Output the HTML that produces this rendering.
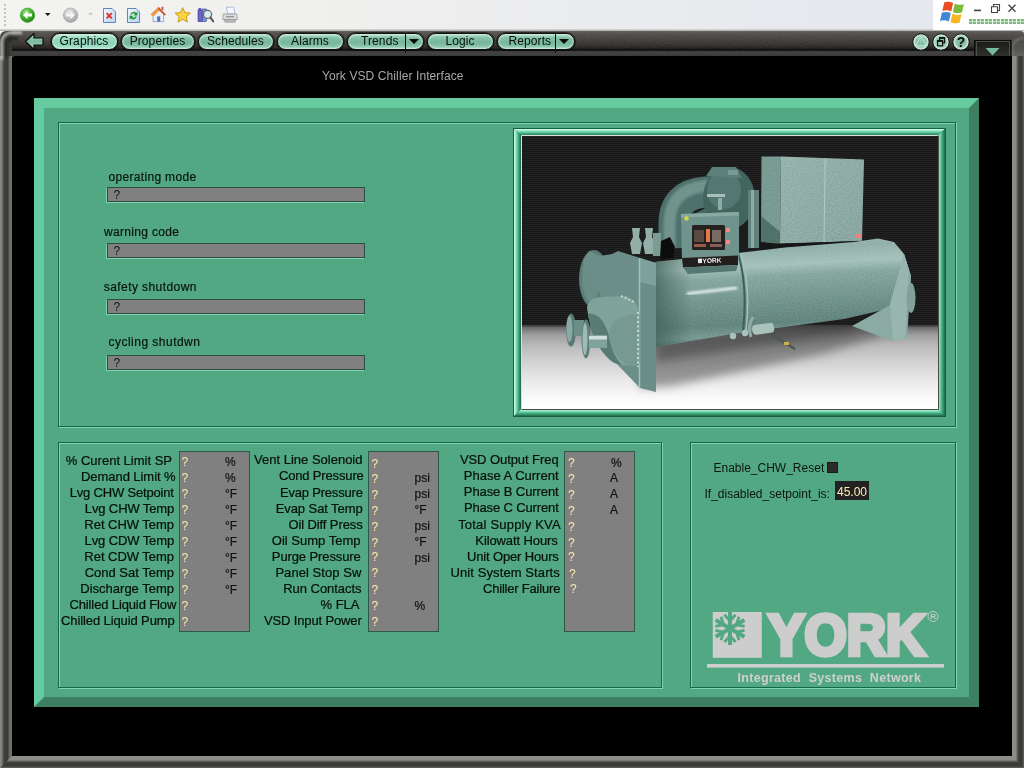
<!DOCTYPE html>
<html><head><meta charset="utf-8"><title>York VSD Chiller Interface</title>
<style>
html,body{margin:0;padding:0;background:#000;}
body{width:1024px;height:768px;position:relative;overflow:hidden;font-family:"Liberation Sans",sans-serif;font-size:12px;color:#111;}
.a{position:absolute;}
.t{position:absolute;white-space:nowrap;line-height:1;}
.lab{-webkit-text-stroke:0.22px #06110c;position:absolute;white-space:nowrap;font-size:13px;line-height:15px;height:15px;text-align:right;color:#06110c;}
.q{position:absolute;white-space:nowrap;font-size:12px;line-height:14px;color:#ffe9a8;}
.u{-webkit-text-stroke:0.2px #111;position:absolute;white-space:nowrap;font-size:12px;line-height:14px;color:#111;}
.gbox{position:absolute;background:#808080;border:1px solid #2c5a48;box-sizing:border-box;}
.fld{position:absolute;background:#808080;border:1px solid #2b4f40;box-sizing:border-box;box-shadow:-1px 1px 0 #7fd0ac;}
.groove{position:absolute;box-sizing:border-box;border:1px solid #0f6a46;box-shadow:inset 1px 1px 0 #80d4ae, 1px 1px 0 #80d4ae;}
.btn{position:absolute;top:32.5px;height:17.5px;box-sizing:border-box;border-radius:8.75px;font-size:12px;line-height:15px;letter-spacing:0.1px;margin-left:-0.5px;padding-right:0;color:#0a0f0c;text-align:center;
 background:linear-gradient(#bfe3d4 0%,#86c3aa 24%,#76b69c 55%,#84c1a8 80%,#b0d9c9 100%);border:1px solid #10100f;box-shadow:0 0 0 1px rgba(0,0,0,.5), inset 0 0 2px 1px rgba(214,238,228,.75);}
</style></head><body>
<div id="root" style="position:absolute;left:0;top:0;width:1024px;height:768px;will-change:transform;">
<!-- browser chrome -->
<div class="a" style="left:0;top:0;width:1024px;height:31px;background:linear-gradient(90deg,#f3f3f1 0%,#efefee 35%,#e8eaee 70%,#e3e6ee 100%);"></div>
<div class="a" style="left:0;top:29px;width:1024px;height:2px;background:linear-gradient(#dcdcda,#a9a9a6);"></div>
<div class="a" style="left:933px;top:0;width:91px;height:30px;background:#fefefe;"></div>
<svg class="a" style="left:0;top:0" width="1024" height="31" viewBox="0 0 1024 31">
 <defs>
  <radialGradient id="gBack" cx="0.4" cy="0.3" r="0.75"><stop offset="0" stop-color="#9be37c"/><stop offset="0.55" stop-color="#3fae2c"/><stop offset="1" stop-color="#1f7d18"/></radialGradient>
  <radialGradient id="gFwd" cx="0.4" cy="0.3" r="0.75"><stop offset="0" stop-color="#e6e6e6"/><stop offset="0.6" stop-color="#bdbdbd"/><stop offset="1" stop-color="#9c9c9c"/></radialGradient>
  <linearGradient id="gPage" x1="0" y1="0" x2="1" y2="1"><stop offset="0" stop-color="#f4f8ff"/><stop offset="1" stop-color="#b9d2f2"/></linearGradient>
 </defs>
 <!-- grip -->
 <g fill="#c2c2bf"><rect x="4" y="4" width="2" height="2"/><rect x="4" y="8" width="2" height="2"/><rect x="4" y="12" width="2" height="2"/><rect x="4" y="16" width="2" height="2"/><rect x="4" y="20" width="2" height="2"/><rect x="4" y="24" width="2" height="2"/></g>
 <!-- back -->
 <circle cx="27.5" cy="15.2" r="7.2" fill="url(#gBack)" stroke="#3c9a2c" stroke-width="0.6"/>
 <path d="M23 15 L27.5 10.8 L27.5 13.4 L32 13.4 L32 16.6 L27.5 16.6 L27.5 19.2 Z" fill="#fff"/>
 <path d="M45 13 L50.5 13 L47.75 16 Z" fill="#111"/>
 <!-- forward -->
 <circle cx="70.6" cy="15.2" r="7.2" fill="url(#gFwd)" stroke="#a6a6a6" stroke-width="0.7"/>
 <path d="M75 15 L70.5 10.8 L70.5 13.4 L66 13.4 L66 16.6 L70.5 16.6 L70.5 19.2 Z" fill="#f4f4f4"/>
 <path d="M88 13 L93 13 L90.5 15.6 Z" fill="#c4c4c4"/>
 <!-- stop -->
 <path d="M103.5 8.5 L112 8.5 L115.5 12 L115.5 22.5 L103.5 22.5 Z" fill="url(#gPage)" stroke="#5f86c4" stroke-width="1"/>
 <path d="M106.6 13.2 L111.8 18.4 M111.8 13.2 L106.6 18.4" stroke="#e0322b" stroke-width="1.9"/>
 <!-- refresh -->
 <path d="M127.5 8.5 L136 8.5 L139.5 12 L139.5 22.5 L127.5 22.5 Z" fill="url(#gPage)" stroke="#5f86c4" stroke-width="1"/>
 <path d="M130.2 14.6 A3.6 3.6 0 0 1 136.2 12.8 L137.4 11.6 L137.4 15.4 L133.6 15.4 L134.9 14.1 A2 2 0 0 0 131.8 14.6 Z" fill="#1f9a35"/>
 <path d="M136.8 16.6 A3.6 3.6 0 0 1 130.8 18.4 L129.6 19.6 L129.6 15.8 L133.4 15.8 L132.1 17.1 A2 2 0 0 0 135.2 16.6 Z" fill="#1f9a35"/>
 <!-- home -->
 <path d="M151 14.5 L158.5 7.2 L165.5 14.5 L163.6 14.5 L163.6 21.6 L153 21.6 L153 14.5 Z" fill="#e9eef8" stroke="#8a9cc0" stroke-width="0.8"/>
 <path d="M150.6 14.8 L158.5 7 L160.6 9.2 L153.4 16.6 Z" fill="#f39a3a"/>
 <path d="M158.5 7 L166 14.8 L164.4 15.6 L158.3 9.4 Z" fill="#c9552a"/>
 <rect x="157.2" y="16.4" width="3" height="5.2" fill="#4f6fb8"/>
 <rect x="161.6" y="6.8" width="1.8" height="3.4" fill="#b9553a"/>
 <!-- star -->
 <path d="M182.7 7.6 L184.9 12.6 L190.4 13.1 L186.2 16.8 L187.5 22.2 L182.7 19.3 L177.9 22.2 L179.2 16.8 L175 13.1 L180.5 12.6 Z" fill="#fbd43a" stroke="#c8951a" stroke-width="0.9" stroke-linejoin="round"/>
 <!-- search -->
 <rect x="198" y="10" width="4.2" height="11.6" fill="#6a63c8" stroke="#3e3a8c" stroke-width="0.6"/>
 <rect x="202.4" y="9" width="4" height="12.6" fill="#7d8fd8" stroke="#3e4a8c" stroke-width="0.6"/>
 <rect x="198.6" y="8" width="2.6" height="2" fill="#5a54a8"/>
 <circle cx="207.6" cy="14.4" r="4" fill="#d9ecf6" stroke="#6a6a6a" stroke-width="1.2"/>
 <path d="M210.4 17.4 L213.2 21.4" stroke="#54585e" stroke-width="2" stroke-linecap="round"/>
 <!-- print -->
 <path d="M226.5 7.2 L233.6 7.2 L235 13.8 L227.6 13.8 Z" fill="#f4f8ff" stroke="#9ab0d6" stroke-width="0.8"/>
 <path d="M223.2 14 L236.8 14 L237.4 19.6 L222.8 19.6 Z" fill="#dcdcdc" stroke="#9a9a9a" stroke-width="0.8"/>
 <path d="M224.2 19.6 L236 19.6 L235 22.2 L225.2 22.2 Z" fill="#bcbcbc" stroke="#8c8c8c" stroke-width="0.6"/>
 <rect x="226" y="16.2" width="8" height="1.2" fill="#8e8e8e"/>
 <!-- windows flag -->
 <g transform="translate(940 1.6) scale(1.17) translate(-939.8 -2.6)">
 <path d="M943.5 3.2 Q947 1.8 951 3.8 L949.4 11 Q945.6 9.2 941.8 10.6 Z" fill="#ea4d24"/>
 <path d="M952.4 4.4 Q956.4 6.2 960.2 4.6 L958.6 11.8 Q954.8 13.4 950.8 11.6 Z" fill="#7bbd38"/>
 <path d="M941.4 12 Q945.2 10.6 949 12.4 L947.4 19.6 Q943.6 17.8 939.8 19.2 Z" fill="#3f86d6"/>
 <path d="M950.4 13 Q954.4 14.8 958.2 13.2 L956.6 20.4 Q952.8 22 948.8 20.2 Z" fill="#f9b522"/>
 </g>
 <!-- window controls -->
 <rect x="974" y="9.6" width="7" height="1.6" fill="#444"/>
 <path d="M993.5 6.5 L993.5 4.5 L999.5 4.5 L999.5 10.5 L997.5 10.5 M991.5 6.8 L997.5 6.8 L997.5 12.5 L991.5 12.5 Z" fill="none" stroke="#444" stroke-width="1.1"/>
 <path d="M1008.5 4.8 L1015.5 11.8 M1015.5 4.8 L1008.5 11.8" stroke="#444" stroke-width="1.3"/>
 <!-- progress segments -->
 <g fill="#7db87d"><rect x="969" y="19" width="7" height="5"/><rect x="977" y="19" width="7" height="5"/><rect x="985" y="19" width="7" height="5"/><rect x="993" y="19" width="7" height="5"/><rect x="1001" y="19" width="7" height="5"/><rect x="1009" y="19" width="7" height="5"/><rect x="1017" y="19" width="7" height="5"/></g>
 <g stroke="#fdfdfd" stroke-width="0.8" opacity="0.75"><path d="M969 21.5 H1024"/><path d="M972.5 19 V24 M980.5 19 V24 M988.5 19 V24 M996.5 19 V24 M1004.5 19 V24 M1012.5 19 V24 M1020.5 19 V24"/></g>
</svg>
<!-- frame -->
<div class="a" style="left:0;top:31px;width:1024px;height:737px;background:#000;"></div>
<!-- toolbar band -->
<div class="a" style="left:0;top:31px;width:1024px;height:25px;background:linear-gradient(#676563 0px,#595654 1px,#4e4a48 4px,#423e3c 9px,#332f2e 14px,#211f1f 17px,#0c0c0c 18.5px,#111 19.5px,#3e3e3e 20.5px,#424242 23px,#383838 25px);"></div>
<!-- bottom border -->
<div class="a" style="left:0px;top:756px;width:1024px;height:12px;background:linear-gradient(#8e8e8a 0px,#8a8a86 4px,#565653 5.5px,#3a3b37 7px,#3a3b37 10px,#5a5a57 11.5px,#6a6a67 12px);"></div>
<svg class="a" style="left:0;top:31px" width="1024" height="20"><filter id="tbnoise" x="0" y="0" width="100%" height="100%"><feTurbulence type="fractalNoise" baseFrequency="0.7 0.9" numOctaves="2" seed="7"/><feColorMatrix type="matrix" values="0 0 0 0 0.5  0 0 0 0 0.45  0 0 0 0 0.45  0.6 0 0 0 -0.18"/></filter><rect width="1024" height="20" filter="url(#tbnoise)" opacity="0.35"/></svg>
<!-- left border -->
<div class="a" style="left:0;top:31px;width:12px;height:737px;clip-path:polygon(0 0,12px 0,12px 725px,0 737px);background:linear-gradient(90deg,#8a8a87 0px,#7a7a77 2px,#4a4a48 3.5px,#383836 6px,#3e3e3c 8px,#6c6c69 9.5px,#70706d 12px);"></div>
<!-- right border -->
<div class="a" style="left:1012px;top:56px;width:12px;height:712px;clip-path:polygon(0 0,12px 0,12px 712px,0 700px);background:linear-gradient(90deg,#8e8e8a 0px,#8a8a86 4px,#565653 5.5px,#3a3b37 7px,#3a3b37 10px,#5a5a57 11.5px,#6a6a67 12px);"></div>
<svg class="a" style="left:0;top:31px" width="1024" height="737" viewBox="0 31 1024 737">
 <defs>
  <radialGradient id="cTL" cx="14" cy="58" r="27" gradientUnits="userSpaceOnUse">
   <stop offset="0" stop-color="#000"/><stop offset="0.08" stop-color="#000"/><stop offset="0.1" stop-color="#4a4a48"/><stop offset="0.2" stop-color="#3a3a38"/><stop offset="0.45" stop-color="#2c2c2a"/><stop offset="0.7" stop-color="#454543"/><stop offset="0.86" stop-color="#c8c8c4"/><stop offset="0.95" stop-color="#9a9a97"/><stop offset="1" stop-color="#777"/></radialGradient>
  <radialGradient id="cTR" cx="1010" cy="58" r="27" gradientUnits="userSpaceOnUse">
   <stop offset="0" stop-color="#000"/><stop offset="0.08" stop-color="#000"/><stop offset="0.1" stop-color="#8a8a86"/><stop offset="0.25" stop-color="#7a7a77"/><stop offset="0.45" stop-color="#3a3b37"/><stop offset="0.8" stop-color="#3a3b37"/><stop offset="0.95" stop-color="#5a5a57"/><stop offset="1" stop-color="#666"/></radialGradient>
  <linearGradient id="gDD" x1="0" y1="0" x2="0" y2="1"><stop offset="0" stop-color="#1a1a19"/><stop offset="1" stop-color="#30302e"/></linearGradient>
  <linearGradient id="gArrow" x1="0" y1="0" x2="0" y2="1"><stop offset="0" stop-color="#a8d8c4"/><stop offset="0.5" stop-color="#7cb8a0"/><stop offset="1" stop-color="#b4dccc"/></linearGradient>
  <radialGradient id="gRound" cx="0.5" cy="0.5" r="0.5"><stop offset="0" stop-color="#7ab69c"/><stop offset="0.55" stop-color="#8ac2aa"/><stop offset="0.82" stop-color="#c4e2d6"/><stop offset="0.93" stop-color="#d6ece4"/><stop offset="1" stop-color="#8fbfac"/></radialGradient>
 </defs>
 <!-- top-left rounded corner -->
 <filter id="bl" x="-50%" y="-50%" width="200%" height="200%"><feGaussianBlur stdDeviation="0.9"/></filter>
 <path d="M0 31 H12 V56 H0 Z" fill="#3a3a38"/>
 <path d="M0 31 H6 A6 6 0 0 0 0 37 Z" fill="#f0f0ee"/>
 <g filter="url(#bl)">
 <path d="M1.6 60 V42 A9.5 9.5 0 0 1 11 32.8 H22" fill="none" stroke="#d2d2ce" stroke-width="2.4" opacity="0.95"/>
 <path d="M6 58 V45 A6.5 6.5 0 0 1 12.5 38.5 H18" fill="none" stroke="#262624" stroke-width="4" opacity="0.85"/>
 </g>
 <path d="M12 56 H15 A3 3 0 0 0 12 59 Z" fill="#4a4a48"/>
 <!-- top-right corner -->
 <linearGradient id="trc" x1="0" y1="0" x2="0" y2="1"><stop offset="0" stop-color="#4c4c4a" stop-opacity="0"/><stop offset="0.5" stop-color="#555553" stop-opacity="0.8"/><stop offset="1" stop-color="#62625f"/></linearGradient>
 <path d="M1012 31 H1024 V56 H1012 Z" fill="url(#trc)"/>
 <path d="M1012.5 56 V47 Q1013 41 1019 39 L1024 38" fill="none" stroke="#7a7a77" stroke-width="1.6" filter="url(#bl)"/>
 <path d="M1024 31 V34 A3 3 0 0 0 1021 31 Z" fill="#fefefe"/>
 <!-- back arrow -->
 <path d="M25.5 41.5 L34 33.5 L34 38 L43 38 L43 45 L34 45 L34 49.5 Z" fill="url(#gArrow)" stroke="#0c0c0c" stroke-width="1.2" stroke-linejoin="round"/>
 <!-- round buttons -->
 <g stroke="#141414" stroke-width="1">
  <circle cx="921" cy="42" r="8.2" fill="url(#gRound)"/>
  <circle cx="941" cy="42" r="8.2" fill="url(#gRound)"/>
  <circle cx="961" cy="42" r="8.2" fill="url(#gRound)"/>
 </g>
 <path d="M921 36.4 L926.2 45.6 L915.8 45.6 Z" fill="none" stroke="#b4dccb" stroke-width="1.3" stroke-linejoin="round"/>
 <path d="M921 39.6 V43 M921 43.8 V44.8" stroke="#a9d4c2" stroke-width="1.1"/>
 <rect x="939.6" y="37.8" width="5" height="5" fill="none" stroke="#0a0a0a" stroke-width="1.1"/>
 <rect x="939.1" y="37.2" width="6" height="1.6" fill="#0a0a0a"/>
 <rect x="937.6" y="40.8" width="5" height="5" fill="#9ccdb9" stroke="#0a0a0a" stroke-width="1.1"/>
 <rect x="937.1" y="40.2" width="6" height="1.6" fill="#0a0a0a"/>
 <!-- dropdown box -->
 <rect x="974.5" y="40.5" width="36.5" height="16" fill="url(#gDD)" stroke="#0a0a0a" stroke-width="1"/>
 <rect x="976.5" y="41.5" width="33" height="15" fill="none" stroke="#5a5a58" stroke-width="1" opacity="0.8"/>
 <path d="M985.5 48 L999.5 48 L992.5 55.5 Z" fill="#78b89e"/>
 <rect x="975" y="56" width="37" height="2" fill="#000"/>
</svg>
<div class="t" style="left:956.8px;top:34.6px;font-size:14px;font-weight:bold;color:#0a0a0a;line-height:14px;">?</div>
<!-- nav buttons -->
<div class="btn" style="left:51px;width:67px;background:linear-gradient(#c8eee0 0%,#9adcc4 25%,#8cd4ba 60%,#9adcc4 85%,#b8e6d6 100%);">Graphics</div>
<div class="btn" style="left:121px;width:74px;">Properties</div>
<div class="btn" style="left:198px;width:76px;">Schedules</div>
<div class="btn" style="left:277px;width:67px;">Alarms</div>
<div class="btn" style="left:347px;width:77px;text-align:left;padding-left:13.5px;">Trends</div>
<div class="a" style="left:405px;top:33px;width:1px;height:20px;background:#0c0c0c;"></div>
<div class="a" style="left:408.5px;top:39px;width:0;height:0;border-left:5px solid transparent;border-right:5px solid transparent;border-top:5.5px solid #0a0a0a;"></div>
<div class="btn" style="left:427px;width:67px;">Logic</div>
<div class="btn" style="left:497px;width:78px;text-align:left;padding-left:11px;">Reports</div>
<div class="a" style="left:555px;top:33px;width:1px;height:20px;background:#0c0c0c;"></div>
<div class="a" style="left:558.5px;top:39px;width:0;height:0;border-left:5px solid transparent;border-right:5px solid transparent;border-top:5.5px solid #0a0a0a;"></div>
<!-- title -->
<div class="t" id="title" style="left:322px;top:69px;font-size:12px;color:#a9a9a9;line-height:14px;letter-spacing:0.1px;">York VSD Chiller Interface</div>
<div class="a" style="left:34px;top:98px;width:945px;height:609px;box-sizing:border-box;background:#52a882;border-style:solid;border-width:10px;border-color:#66cc9f #3f8063 #3f8063 #66cc9f;"></div>
<div class="groove" style="left:58px;top:122px;width:898px;height:305px;"></div>
<div class="groove" style="left:58px;top:442px;width:604px;height:246px;"></div>
<div class="groove" style="left:690px;top:442px;width:266px;height:246px;"></div>
<div class="t sl" style="left:108.5px;top:170px;font-size:12px;line-height:14px;letter-spacing:0.32px;color:#08140f;-webkit-text-stroke:0.2px #08140f;">operating mode</div>
<div class="fld" style="left:107px;top:186.5px;width:258px;height:15.5px;"></div>
<div class="t" style="left:113.5px;top:188px;font-size:12px;line-height:14px;color:#161616;">?</div>
<div class="t sl" style="left:104px;top:225px;font-size:12px;line-height:14px;letter-spacing:0.33px;color:#08140f;-webkit-text-stroke:0.2px #08140f;">warning code</div>
<div class="fld" style="left:107px;top:242.5px;width:258px;height:15.5px;"></div>
<div class="t" style="left:113.5px;top:244px;font-size:12px;line-height:14px;color:#161616;">?</div>
<div class="t sl" style="left:103.8px;top:280.3px;font-size:12px;line-height:14px;letter-spacing:0.42px;color:#08140f;-webkit-text-stroke:0.2px #08140f;">safety shutdown</div>
<div class="fld" style="left:107px;top:298.5px;width:258px;height:15.5px;"></div>
<div class="t" style="left:113.5px;top:300px;font-size:12px;line-height:14px;color:#161616;">?</div>
<div class="t sl" style="left:108.5px;top:335.3px;font-size:12px;line-height:14px;letter-spacing:0.48px;color:#08140f;-webkit-text-stroke:0.2px #08140f;">cycling shutdwn</div>
<div class="fld" style="left:107px;top:354.5px;width:258px;height:15.5px;"></div>
<div class="t" style="left:113.5px;top:356px;font-size:12px;line-height:14px;color:#161616;">?</div>
<div class="gbox" style="left:179px;top:451px;width:71px;height:181px;"></div>
<div class="gbox" style="left:368px;top:451px;width:71px;height:181px;"></div>
<div class="gbox" style="left:564px;top:451px;width:71px;height:181px;"></div>
<div class="lab" style="right:852.01px;top:453px;">% Curent Limit SP</div>
<div class="lab" style="right:848.44px;top:469px;letter-spacing:-0.06px;">Demand Limit %</div>
<div class="lab" style="right:850.32px;top:485px;letter-spacing:-0.18px;">Lvg CHW Setpoint</div>
<div class="lab" style="right:849.88px;top:501px;letter-spacing:-0.12px;">Lvg CHW Temp</div>
<div class="lab" style="right:849.97px;top:517px;letter-spacing:-0.03px;">Ret CHW Temp</div>
<div class="lab" style="right:849.9px;top:533px;letter-spacing:-0.1px;">Lvg CDW Temp</div>
<div class="lab" style="right:849.97px;top:549px;letter-spacing:-0.03px;">Ret CDW Temp</div>
<div class="lab" style="right:850.01px;top:565px;">Cond Sat Temp</div>
<div class="lab" style="right:849.98px;top:581px;">Discharge Temp</div>
<div class="lab" style="right:847.87px;top:597px;letter-spacing:-0.13px;">Chilled Liquid Flow</div>
<div class="lab" style="right:849.39px;top:613px;letter-spacing:-0.11px;">Chilled Liquid Pump</div>
<div class="lab" style="right:661.5px;top:452px;">Vent Line Solenoid</div>
<div class="lab" style="right:660.35px;top:468px;letter-spacing:-0.15px;">Cond Pressure</div>
<div class="lab" style="right:661.31px;top:485px;letter-spacing:-0.19px;">Evap Pressure</div>
<div class="lab" style="right:661.42px;top:501px;letter-spacing:-0.08px;">Evap Sat Temp</div>
<div class="lab" style="right:661.4px;top:517px;letter-spacing:-0.1px;">Oil Diff Press</div>
<div class="lab" style="right:663.52px;top:533px;">Oil Sump Temp</div>
<div class="lab" style="right:663.39px;top:549px;letter-spacing:-0.11px;">Purge Pressure</div>
<div class="lab" style="right:662.56px;top:565px;letter-spacing:0.06px;">Panel Stop Sw</div>
<div class="lab" style="right:662.46px;top:581px;letter-spacing:-0.04px;">Run Contacts</div>
<div class="lab" style="right:664.5px;top:597px;">% FLA</div>
<div class="lab" style="right:662.36px;top:613px;letter-spacing:-0.14px;">VSD Input Power</div>
<div class="lab" style="right:465.43px;top:452px;letter-spacing:-0.07px;">VSD Output Freq</div>
<div class="lab" style="right:465.51px;top:468px;">Phase A Current</div>
<div class="lab" style="right:465.41px;top:484px;letter-spacing:-0.09px;">Phase B Current</div>
<div class="lab" style="right:465.36px;top:500px;letter-spacing:-0.14px;">Phase C Current</div>
<div class="lab" style="right:463.2px;top:517px;letter-spacing:0.2px;">Total Supply KVA</div>
<div class="lab" style="right:466.39px;top:533px;letter-spacing:-0.11px;">Kilowatt Hours</div>
<div class="lab" style="right:465.35px;top:549px;letter-spacing:-0.15px;">Unit Oper Hours</div>
<div class="lab" style="right:464.1px;top:565px;letter-spacing:0.1px;">Unit System Starts</div>
<div class="lab" style="right:463.8px;top:581px;letter-spacing:-0.2px;">Chiller Failure</div>
<div class="q" style="left:181.5px;top:455px;">?</div>
<div class="q" style="left:181.5px;top:471px;">?</div>
<div class="q" style="left:181.5px;top:487px;">?</div>
<div class="q" style="left:181.5px;top:503px;">?</div>
<div class="q" style="left:181.5px;top:519px;">?</div>
<div class="q" style="left:181.5px;top:535px;">?</div>
<div class="q" style="left:181.5px;top:551px;">?</div>
<div class="q" style="left:181.5px;top:567px;">?</div>
<div class="q" style="left:181.5px;top:583px;">?</div>
<div class="q" style="left:181.5px;top:599px;">?</div>
<div class="q" style="left:181.5px;top:615px;">?</div>
<div class="q" style="left:371.5px;top:457px;">?</div>
<div class="q" style="left:371.5px;top:472px;">?</div>
<div class="q" style="left:371.5px;top:488px;">?</div>
<div class="q" style="left:371.5px;top:504px;">?</div>
<div class="q" style="left:371.5px;top:520px;">?</div>
<div class="q" style="left:371.5px;top:536px;">?</div>
<div class="q" style="left:371.5px;top:550px;">?</div>
<div class="q" style="left:371.5px;top:566px;">?</div>
<div class="q" style="left:371.5px;top:583px;">?</div>
<div class="q" style="left:371.5px;top:599px;">?</div>
<div class="q" style="left:371.5px;top:615px;">?</div>
<div class="q" style="left:568px;top:456px;">?</div>
<div class="q" style="left:568px;top:472px;">?</div>
<div class="q" style="left:568px;top:488px;">?</div>
<div class="q" style="left:568px;top:504px;">?</div>
<div class="q" style="left:568px;top:520px;">?</div>
<div class="q" style="left:568px;top:536px;">?</div>
<div class="q" style="left:568px;top:550px;">?</div>
<div class="q" style="left:569px;top:567px;">?</div>
<div class="q" style="left:570px;top:582px;">?</div>
<div class="u" style="left:225px;top:455px;">%</div>
<div class="u" style="left:225px;top:471px;">%</div>
<div class="u" style="left:225px;top:487px;">°F</div>
<div class="u" style="left:225px;top:503px;">°F</div>
<div class="u" style="left:225px;top:519px;">°F</div>
<div class="u" style="left:225px;top:535px;">°F</div>
<div class="u" style="left:225px;top:551px;">°F</div>
<div class="u" style="left:225px;top:567px;">°F</div>
<div class="u" style="left:225px;top:583px;">°F</div>
<div class="u" style="left:414.5px;top:471px;">psi</div>
<div class="u" style="left:414.5px;top:487px;">psi</div>
<div class="u" style="left:414.5px;top:503px;">°F</div>
<div class="u" style="left:414.5px;top:519px;">psi</div>
<div class="u" style="left:414.5px;top:535px;">°F</div>
<div class="u" style="left:414.5px;top:551px;">psi</div>
<div class="u" style="left:414.5px;top:599px;">%</div>
<div class="u" style="left:611px;top:456px;">%</div>
<div class="u" style="left:610px;top:471px;">A</div>
<div class="u" style="left:610px;top:487px;">A</div>
<div class="u" style="left:610px;top:503px;">A</div>
<div class="t" style="left:713.5px;top:460.5px;font-size:12px;line-height:14px;color:#0c1410;">Enable_CHW_Reset</div>
<div class="a" style="left:827px;top:462px;width:11px;height:11px;background:#2b2b2b;border:1px solid #1a1a1a;box-sizing:border-box;"></div>
<div class="t" style="left:704.5px;top:487px;font-size:12px;line-height:14px;color:#0c1410;">If_disabled_setpoint_is:</div>
<div class="a" style="left:835px;top:481px;width:34px;height:19px;background:#222;"></div>
<div class="t" style="left:837px;top:484.5px;font-size:12px;line-height:14px;color:#ffeeb0;">45.00</div>
<svg class="a" style="left:700px;top:600px" width="256" height="96" viewBox="700 600 256 96">
 <rect x="712.5" y="612" width="49.3" height="45.8" fill="#cdcdcd"/>
 <g stroke="#52a882" stroke-linecap="butt" fill="none" transform="translate(730 628.4)">
  <g id="arm"><path d="M0 0 V-16.6" stroke-width="4"/><path d="M0 -7.5 L-5.6 -13.6 M0 -7.5 L5.6 -13.6" stroke-width="2.8"/></g>
  <use href="#arm" transform="rotate(60)"/><use href="#arm" transform="rotate(120)"/><use href="#arm" transform="rotate(180)"/><use href="#arm" transform="rotate(240)"/><use href="#arm" transform="rotate(300)"/>
 </g>
 <rect x="700" y="600" width="12.5" height="70" fill="#52a882"/>
 <rect x="707" y="664" width="237" height="3.6" fill="#cfcfcf"/>
 <text id="york" x="768.3" y="655.2" font-family="Liberation Sans, sans-serif" font-weight="bold" font-size="57" fill="#cdcdcd" stroke="#cdcdcd" stroke-width="4.6" textLength="157" lengthAdjust="spacingAndGlyphs">YORK</text>
 <circle cx="933" cy="616.5" r="5" fill="none" stroke="#c9c9c9" stroke-width="1"/>
 <text x="930.3" y="619.4" font-family="Liberation Sans, sans-serif" font-size="8" font-weight="bold" fill="#c9c9c9">R</text>
 <text id="isn" x="737.5" y="682" font-family="Liberation Sans, sans-serif" font-weight="bold" font-size="12.5" fill="#cfcfcf" textLength="183.5" lengthAdjust="spacing" xml:space="preserve">Integrated  Systems  Network</text>
</svg>
<div class="a" style="left:513px;top:128px;width:433px;height:289px;background:#1a5e40;"></div>
<div class="a" style="left:514px;top:129px;width:431px;height:287px;background:
 linear-gradient(90deg,#c8ffe8 0,#8fe6c0 2px,#4fb88c 4px,#2a8560 6px,#1d6a48 7px,transparent 7px),
 linear-gradient(270deg,#1d6a48 0,#2a8560 2px,#4fb88c 4px,#8fe6c0 6px,#c8ffe8 7px,transparent 7px);"></div>
<svg class="a" style="left:513px;top:128px" width="433" height="289" viewBox="0 0 433 289">
 <defs>
  <linearGradient id="fT" x1="0" y1="0" x2="0" y2="1"><stop offset="0" stop-color="#d4fff0"/><stop offset="0.3" stop-color="#86e2bc"/><stop offset="0.6" stop-color="#48b086"/><stop offset="1" stop-color="#1d6a48"/></linearGradient>
  <linearGradient id="fL" x1="0" y1="0" x2="1" y2="0"><stop offset="0" stop-color="#d4fff0"/><stop offset="0.3" stop-color="#86e2bc"/><stop offset="0.6" stop-color="#48b086"/><stop offset="1" stop-color="#1d6a48"/></linearGradient>
 </defs>
 <rect x="0" y="0" width="433" height="289" fill="#1a5e40"/>
 <!-- top -->
 <path d="M1 1 H432 L424 8 H8 Z" fill="url(#fT)"/>
 <!-- bottom -->
 <path d="M8 281 H424 L432 288 H1 Z" fill="url(#fT)"/>
 <!-- left -->
 <path d="M1 1 L8 8 V281 L1 288 Z" fill="url(#fL)"/>
 <!-- right -->
 <path d="M424 8 L432 1 V288 L424 281 Z" fill="url(#fL)"/>
 <path d="M8.5 281 V7.5 H424.5" fill="none" stroke="#dcdcdc" stroke-width="1"/>
 <path d="M8.5 281.5 H425.5 V7.5" fill="none" stroke="#4e4a48" stroke-width="1"/>
</svg>
<svg class="a" id="photo" style="left:522px;top:136px" width="416" height="273" viewBox="0 0 416 273">
 <defs>
  <pattern id="scan" width="4" height="2" patternUnits="userSpaceOnUse"><rect width="4" height="1" fill="#222222"/><rect y="1" width="4" height="1" fill="#181818"/></pattern>
  <linearGradient id="floor" x1="0" y1="0" x2="0" y2="1"><stop offset="0" stop-color="#333333"/><stop offset="0.03" stop-color="#6a6a6a"/><stop offset="0.06" stop-color="#808080"/><stop offset="0.124" stop-color="#a0a0a0"/><stop offset="0.26" stop-color="#bcbcbc"/><stop offset="0.4" stop-color="#cdcdcd"/><stop offset="0.54" stop-color="#dcdcdc"/><stop offset="0.68" stop-color="#ebebeb"/><stop offset="0.82" stop-color="#f6f6f6"/><stop offset="0.93" stop-color="#fefefe"/><stop offset="1" stop-color="#ffffff"/></linearGradient>
  <linearGradient id="tank" x1="0" y1="0" x2="0.13" y2="1"><stop offset="0" stop-color="#98b6af"/><stop offset="0.16" stop-color="#8dada6"/><stop offset="0.3" stop-color="#a2bfb8"/><stop offset="0.4" stop-color="#80a39b"/><stop offset="0.62" stop-color="#6c9089"/><stop offset="0.82" stop-color="#5b7f78"/><stop offset="0.93" stop-color="#74968f"/><stop offset="1" stop-color="#486a64"/></linearGradient>
  <linearGradient id="tankL" x1="0" y1="0" x2="1" y2="0"><stop offset="0" stop-color="#3f5f59" stop-opacity="0.75"/><stop offset="1" stop-color="#3f5f59" stop-opacity="0"/></linearGradient>
  <linearGradient id="cabF" x1="0" y1="0" x2="1" y2="1"><stop offset="0" stop-color="#8faca6"/><stop offset="1" stop-color="#7f9f99"/></linearGradient>
  <filter id="grain" x="0" y="0" width="100%" height="100%"><feTurbulence type="fractalNoise" baseFrequency="0.85" numOctaves="1" seed="3" result="n"/><feColorMatrix in="n" type="matrix" values="0 0 0 0 1  0 0 0 0 1  0 0 0 0 1  1.1 0 0 0 -0.38" result="a"/><feComposite in="a" in2="SourceGraphic" operator="in"/></filter>
  <filter id="soft" x="-20%" y="-20%" width="140%" height="160%"><feGaussianBlur stdDeviation="5"/></filter>
  <filter id="soft2" x="-20%" y="-20%" width="140%" height="140%"><feGaussianBlur stdDeviation="1.2"/></filter>
  <clipPath id="fl"><rect y="189" width="416" height="84"/></clipPath>
 </defs>
 <rect width="416" height="273" fill="url(#scan)"/>
 <rect y="189" width="416" height="84" fill="url(#floor)"/>
 <!-- soft shadow under unit -->
 <g clip-path="url(#fl)">
  <path d="M120 214 L134 200 L330 176 L380 190 L345 204 L300 218 L150 250 L118 252 Z" fill="#444" opacity="0.5" filter="url(#soft)"/>
  <path d="M134 204 L330 178 L334 196 L134 226 Z" fill="#333" opacity="0.45" filter="url(#soft)"/>
 </g>
 <!-- evaporator rear shell end -->
 <ellipse cx="72" cy="143" rx="15" ry="29" fill="#5b7d77"/>
 <ellipse cx="69" cy="142" rx="9" ry="24" fill="#6a8d86"/>
 <!-- suction elbow -->
 <path d="M152 112 L152 88 Q152 58 184 56 L200 55" fill="none" stroke="#4e726b" stroke-width="31"/>
 <path d="M160 112 L160 84 L200 64 L214 110 Z" fill="#466962"/>
 <path d="M147.5 112 L147.5 88 Q147.5 53 184 50 L200 49" fill="none" stroke="#6f938c" stroke-width="12" filter="url(#soft2)"/>
 <!-- compressor -->
 <ellipse cx="207" cy="62" rx="26" ry="31" fill="#42655e"/>
 <ellipse cx="202" cy="54" rx="17" ry="19" fill="#547871"/>
 <path d="M184 40 L190 31 L214 31 L220 42 Z" fill="#5c8079"/>
 <rect x="206" y="34" width="10" height="5" fill="#7a9b94"/>
 <rect x="185" y="58" width="18" height="3" fill="#a9c0ba"/>
 <rect x="196" y="62" width="4" height="12" fill="#8eaca5"/>
 <rect x="226" y="54" width="11" height="58" fill="#5f837c"/>
 <rect x="229" y="54" width="3" height="58" fill="#8fada6"/>
 <!-- control cabinet -->
 <path d="M239.5 20.5 L259 20.5 L258 108 L239 105.5 Z" fill="#72958e"/>
 <path d="M239.5 20.5 L259 20.5 L258 108 L239 105.5 Z" fill="#e8f4f1" filter="url(#grain)" opacity="0.3"/>
 <path d="M239.2 80 L258.2 96 L258 108 L239 105.5 Z" fill="#3f615a" opacity="0.7"/>
 <path d="M259 20.5 L342 23.5 L340 104.8 L258 108 Z" fill="url(#cabF)"/>
 <path d="M259 20.5 L342 23.5 L340 104.8 L258 108 Z" fill="#e8f4f1" filter="url(#grain)" opacity="0.45"/>
 <path d="M303.2 22 L302 106.4" stroke="#b4cbc5" stroke-width="1"/>
 <rect x="333" y="98" width="6" height="4" fill="#f08080"/>
 <path d="M238 108 L342 105 L342 110 L238 113 Z" fill="#161616"/>
 <!-- main shell -->
 <path id="shell" d="M133 126 L216 117 L263 111.5 L332 106 L356 102.5 L372 106 L382 118 L389 140 L388 160 L380 174 L370 172 L322 183 L285 188 L210 198 L134 211 Z" fill="url(#tank)"/>
 <path d="M133 126 L216 117 L263 111.5 L332 106 L356 102.5 L372 106 L382 118 L389 140 L388 160 L380 174 L370 172 L322 183 L285 188 L210 198 L134 211 Z" fill="#eef6f4" filter="url(#grain)" opacity="0.3"/>
 <path d="M133 126 L170 122 L170 204 L134 211 Z" fill="url(#tankL)"/>
 <path d="M166 157.5 L214 152" stroke="#e0ece9" stroke-width="3" stroke-linecap="round" filter="url(#soft2)"/>
 <path d="M216 117 Q226 150 221 196" fill="none" stroke="#3c5f58" stroke-width="2"/>
 <path d="M219 117 Q229 150 224 195" fill="none" stroke="#a5c1ba" stroke-width="1.5"/>
 <!-- right support -->
 <path d="M330 190 L370 168 L382 118 L389 140 L385 203 L369 204.5 Z" fill="#8aaaa3"/>
 <path d="M368 168 L382 118 L387 134 L383 203 L371 204.5 Z" fill="#98b6af"/>
 <ellipse cx="389" cy="162" rx="4.5" ry="15" fill="#80a29b"/>
 <!-- oil pump bits -->
 <rect x="230" y="188" width="22" height="10" rx="4" transform="rotate(-8 240 192)" fill="#a9c2bc"/>
 <path d="M231 181 Q225 190 229 201" stroke="#8fada6" stroke-width="3" fill="none"/>
 <path d="M250 199 L273 213" stroke="#4c5752" stroke-width="2.5"/>
 <rect x="262" y="206" width="5" height="3" fill="#c9b04a"/>
 <circle cx="223" cy="197" r="3.2" fill="#a9c2bc"/><circle cx="211" cy="200" r="3.2" fill="#a9c2bc"/>
 <!-- tubesheet and leg -->
 <path d="M61 126 L67 115 L78 120 L90 118 L96 115 L118 122 L118 252 L89 222 L80 162 Z" fill="#6b8f88"/>
 <path d="M118 122 L134 127 L134 256 L118 252 Z" fill="#6a8e87"/>
 <path d="M118 122 L134 127 L134 150 L118 146 Z" fill="#7da19a"/>
 <path d="M117.5 122 L117.5 252" stroke="#a3c0b9" stroke-width="1.5"/>
 <!-- waterbox -->
 <path d="M65 172 Q66 162 78 161 L104 160 Q118 166 118 182 L118 228 Q104 232 92 226 Q70 208 65 172 Z" fill="#7fa29b"/>
 <path d="M66 178 Q80 176 87 200 Q90 220 100 229 Q92 228 88 224 Q70 208 66 178 Z" fill="#587b74"/>
 <path d="M87 202 Q87 179 116 178 L116 230 Q96 232 87 202 Z" fill="#769992"/>
 <path d="M116 176 L116 231" stroke="#c6d8d3" stroke-width="2" stroke-dasharray="2 2.5"/>
 <path d="M99 160 L112 166" stroke="#c6d8d3" stroke-width="2" stroke-dasharray="2 2"/>
 <!-- nozzle flanges -->
 <ellipse cx="49" cy="194" rx="5" ry="16.5" fill="#587a74"/>
 <ellipse cx="47.5" cy="193" rx="3" ry="13" fill="#8aaaa3"/>
 <rect x="52" y="184" width="10" height="16" fill="#6c8f88"/>
 <ellipse cx="64" cy="203" rx="4.5" ry="19.5" fill="#5c7f78"/>
 <ellipse cx="63" cy="203" rx="2.5" ry="16" fill="#9dbab3"/>
 <rect x="67" y="199" width="18" height="13" fill="#7fa29b"/><rect x="67" y="200" width="18" height="3.5" fill="#cfdfda"/>
 <!-- relief valves -->
 <path d="M110 92 h8 l-1 9 l3 6 l-2 11 h-8 l-2 -11 l3 -6 Z" fill="#92afa8"/>
 <path d="M123 92 h8 l-1 9 l3 6 l-2 11 h-8 l-2 -11 l3 -6 Z" fill="#92afa8"/>
 <rect x="131" y="97" width="8" height="23" fill="#7b9c95"/>
 <path d="M139 105 l9 -4 l5 10 l-2 11 l-13 1 Z" fill="#0c0c0c"/>
 <!-- control panel -->
 <path d="M159 78 L217 76 L217 122 L160 124 Z" fill="#6f948d"/>
 <path d="M159 78 L217 76 L217 79.5 L159 81.5 Z" fill="#88a9a2"/>
 <rect x="170" y="89" width="33" height="25" rx="1.5" fill="#24211f"/>
 <rect x="172" y="94" width="10" height="12" fill="#5a4a44"/><rect x="184" y="93" width="4" height="13" fill="#e0784a"/><rect x="190" y="94" width="9" height="12" fill="#7a6a64"/>
 <rect x="172" y="108" width="12" height="3" fill="#9a5a4a"/><rect x="188" y="108" width="12" height="3" fill="#8a5a5a"/>
 <circle cx="164.5" cy="82.5" r="2.3" fill="#d6d24a"/>
 <rect x="204" y="92" width="4" height="4" fill="#f08a8a"/><rect x="204" y="104" width="4" height="4" fill="#f08a8a"/>
 <path d="M160 122 L216 119.5 L216 129 L161 131.5 Z" fill="#221e1d"/>
 <rect x="176" y="122.6" width="4" height="4.6" fill="#e8e8e8" transform="rotate(-2.5 178 125)"/>
 <text x="180.6" y="127.3" font-family="Liberation Sans, sans-serif" font-weight="bold" font-size="6.6" fill="#f2f2f2" transform="rotate(-2.5 180 127)" textLength="19" lengthAdjust="spacingAndGlyphs">YORK</text>
 <path d="M161 131.5 L216 129 L214 135 L166 138 Z" fill="#557972"/>
</svg>
</div>
</body></html>
